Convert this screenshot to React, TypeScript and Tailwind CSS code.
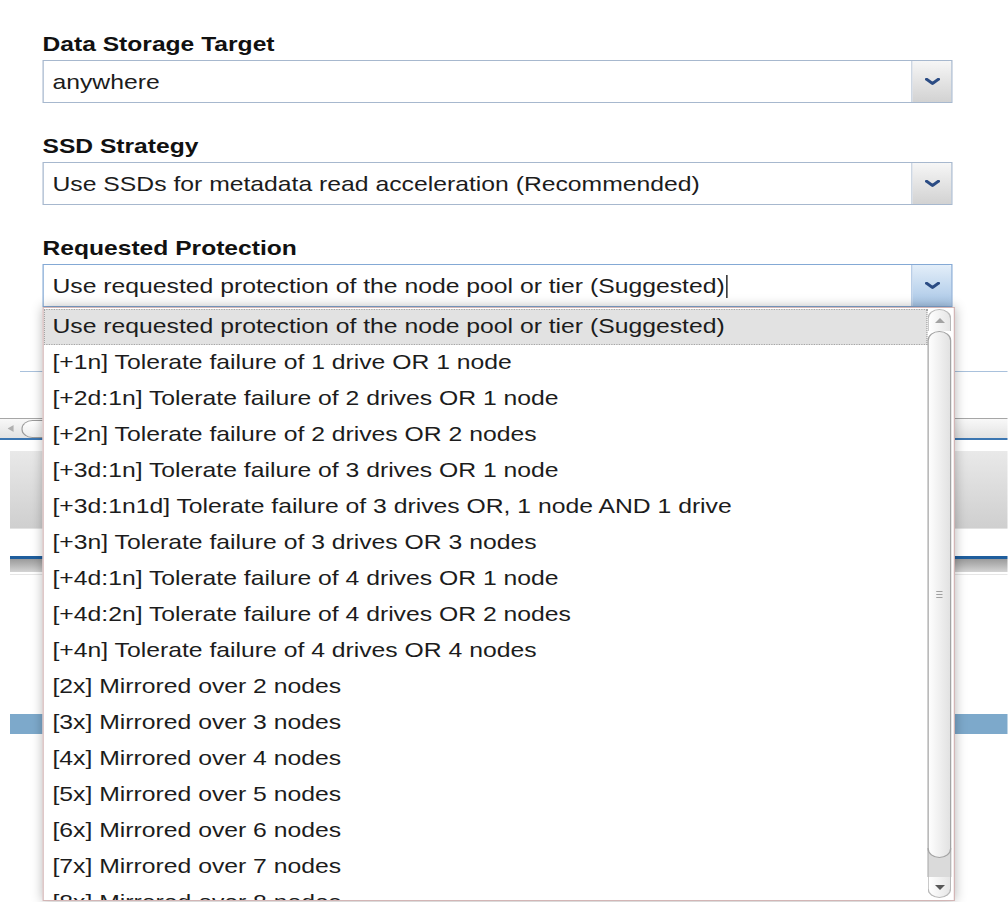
import type { ReactNode } from "react";

// protection levels offered by the node pool policy
const protectionOptions = [
  "Use requested protection of the node pool or tier (Suggested)",
  "[+1n] Tolerate failure of 1 drive OR 1 node",
  "[+2d:1n] Tolerate failure of 2 drives OR 1 node",
  "[+2n] Tolerate failure of 2 drives OR 2 nodes",
  "[+3d:1n] Tolerate failure of 3 drives OR 1 node",
  "[+3d:1n1d] Tolerate failure of 3 drives OR, 1 node AND 1 drive",
  "[+3n] Tolerate failure of 3 drives OR 3 nodes",
  "[+4d:1n] Tolerate failure of 4 drives OR 1 node",
  "[+4d:2n] Tolerate failure of 4 drives OR 2 nodes",
  "[+4n] Tolerate failure of 4 drives OR 4 nodes",
  "[2x] Mirrored over 2 nodes",
  "[3x] Mirrored over 3 nodes",
  "[4x] Mirrored over 4 nodes",
  "[5x] Mirrored over 5 nodes",
  "[6x] Mirrored over 6 nodes",
  "[7x] Mirrored over 7 nodes",
  "[8x] Mirrored over 8 nodes",
];

function Chevron() {
  return (
    <svg width="12" height="7" viewBox="0 0 12 7" fill="none">
      <path d="M1.3 1.3 L6 5.5 L10.7 1.3" stroke="#2b4c84" strokeWidth="2.8" strokeLinecap="round" strokeLinejoin="round" />
    </svg>
  );
}

function Field({ label, children }: { label: string; children: ReactNode }) {
  return (
    <div className="relative">
      <div className="h-[24px] text-[19.7px] leading-[24px] font-bold text-[#111]">{label}</div>
      <div className="mt-[4px]">{children}</div>
    </div>
  );
}

function Select({ value, focused = false }: { value: string; focused?: boolean }) {
  return (
    <div
      className={`flex h-[43px] w-[728px] border bg-white ${
        focused ? "border-[#84a9d5]" : "border-[#a7b8ce]"
      }`}
    >
      <div className="flex flex-1 items-center pt-[2px] pl-[7px] text-[19.8px] text-[#1c1c1c] whitespace-nowrap">
        {value}
        {focused && <span className="ml-px h-[23px] w-px bg-black" />}
      </div>
      <div
        className={`flex w-[32px] items-center justify-center rounded-tr-[2px] border-l bg-gradient-to-b ${
          focused
            ? "border-[#84a9d5] from-[#e3eef9] to-[#a8c6e6]"
            : "border-[#a7b8ce] from-[#f6f6f6] to-[#d2d2d2]"
        }`}
      >
        <Chevron />
      </div>
    </div>
  );
}

function Scrollbar() {
  return (
    <div className="mr-[2px] flex w-[19px] flex-col pt-px pb-[2px]">
      {/* up arrow */}
      <div className="flex h-[22px] items-center justify-center rounded-t-[10px] border border-b-0 border-[#b8b8b8] bg-gradient-to-r from-white to-[#e6e6e6]">
        <svg width="8" height="5" viewBox="0 0 8 5">
          <path d="M0 5 L4 0 L8 5 Z" fill="#a3a3a3" />
        </svg>
      </div>
      {/* thumb */}
      <div className="relative z-10 flex flex-1 flex-col items-center justify-center gap-[2px] rounded-[10px] border border-[#a3a3a3] bg-gradient-to-r from-[#fefefe] to-[#e2e2e2]">
        <span className="h-px w-[5px] bg-[#a0a0a0]" />
        <span className="h-px w-[5px] bg-[#a0a0a0]" />
        <span className="h-px w-[5px] bg-[#a0a0a0]" />
      </div>
      {/* rest of track */}
      <div className="-mt-[10px] h-[29px] border-x border-[#b8b8b8] bg-[#dadada]" />
      {/* down arrow */}
      <div className="flex h-[21px] items-center justify-center rounded-b-[10px] border border-t-0 border-[#b8b8b8] bg-gradient-to-r from-white to-[#e6e6e6]">
        <svg width="8" height="5" viewBox="0 0 8 5">
          <path d="M0 0 L4 5 L8 0 Z" fill="#575757" />
        </svg>
      </div>
    </div>
  );
}

export default function App() {
  return (
    <div className="relative h-[902px] w-[1008px] overflow-hidden bg-white font-['Liberation_Sans',Arial,sans-serif]">
      <div className="w-[806.4px] origin-top-left scale-x-125">
        {/* form */}
        <div className="flex flex-col gap-[31px] pt-[32px] pl-[34px]">
          <Field label="Data Storage Target">
            <Select value="anywhere" />
          </Field>
          <Field label="SSD Strategy">
            <Select value="Use SSDs for metadata read acceleration (Recommended)" />
          </Field>
          <Field label="Requested Protection">
            <Select value="Use requested protection of the node pool or tier (Suggested)" focused />

            {/* open option list */}
            <div className="absolute top-full left-0 z-10 flex h-[594px] w-[730px] overflow-hidden border border-[#d3b6b6] bg-white shadow-[0_0_10px_rgba(0,0,0,0.3)]">
              <ul className="flex-1 pt-px">
                {protectionOptions.map((opt, i) => (
                  <li
                    key={opt}
                    className={`flex h-[36px] items-center text-[19.8px] text-[#1c1c1c] whitespace-nowrap ${
                      i === 0 ? "border border-dotted border-[#a5a5a5] bg-[#e2e2e2] pl-[6px]" : "pl-[7px]"
                    }`}
                  >
                    {opt}
                  </li>
                ))}
              </ul>
              <Scrollbar />
            </div>
          </Field>
        </div>

        {/* page content underneath the list */}
        <div className="flex flex-col">
          <div className="mt-[64px] ml-[16px] h-px bg-[#a9c1dc]" />

          <div className="mt-[46px] flex h-[22px] items-center border-t border-b-2 border-t-[#a6a6a6] border-b-[#3c76b1] bg-gradient-to-b from-[#f8f8f8] to-[#e3e3e3] pl-[6px]">
            <svg width="5" height="7" viewBox="0 0 5 7">
              <path d="M5 0 L0 3.5 L5 7 Z" fill="#b0b0b0" />
            </svg>
            <div className="ml-[6px] h-[18px] w-[300px] rounded-l-full border border-r-0 border-[#9c9c9c] bg-gradient-to-b from-white to-[#ececec]" />
          </div>

          <div className="mt-[11px] ml-[8px] h-[78px] border-b border-[#e2e2e2] bg-gradient-to-b from-[#e9e9e9] to-[#cfcfcf]" />

          <div className="mt-[27px] ml-[8px] h-[3px] bg-[#1f5e9d]" />
          <div className="ml-[8px] h-[13px] bg-gradient-to-b from-[#9b9b9b] to-[#d4d4d4]" />
          <div className="mt-[2px] ml-[8px] h-px bg-[#e6e6e6]" />

          <div className="mt-[139px] ml-[8px] h-[20px] bg-[#7da9cb]" />
        </div>
      </div>
    </div>
  );
}
